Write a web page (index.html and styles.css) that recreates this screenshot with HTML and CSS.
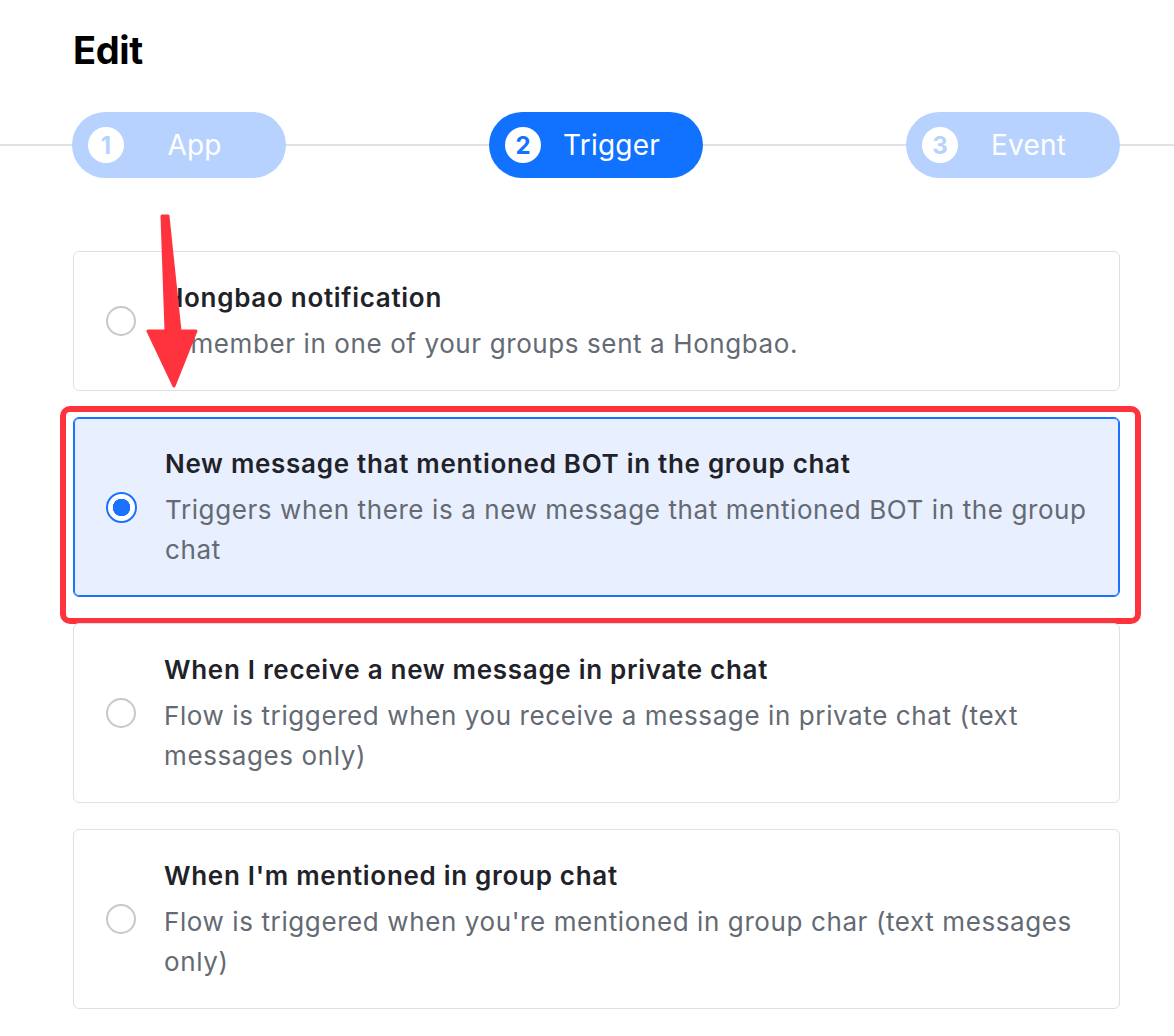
FILE: index.html
```html
<!DOCTYPE html>
<html lang="en">
<head>
<meta charset="utf-8">
<title>Edit</title>
<link rel="stylesheet" href="styles.css">
</head>
<body>
<div class="page">
  <h1 class="title">Edit</h1>

  <div class="steps">
    <div class="step step-done"><span class="step-num">1</span><span class="step-label">App</span></div>
    <div class="step step-active"><span class="step-num">2</span><span class="step-label">Trigger</span></div>
    <div class="step step-todo"><span class="step-num">3</span><span class="step-label">Event</span></div>
  </div>

  <div class="options">
    <div class="option">
      <span class="radio"></span>
      <div class="option-text">
        <div class="option-title">Hongbao notification</div>
        <div class="option-desc">A member in one of your groups sent a Hongbao.</div>
      </div>
    </div>
    <div class="option option-selected annotated">
      <span class="radio radio-on"></span>
      <div class="option-text">
        <div class="option-title">New message that mentioned BOT in the group chat</div>
        <div class="option-desc">Triggers when there is a new message that mentioned BOT in the group chat</div>
      </div>
    </div>
    <div class="option">
      <span class="radio"></span>
      <div class="option-text">
        <div class="option-title">When I receive a new message in private chat</div>
        <div class="option-desc">Flow is triggered when you receive a message in private chat (text messages only)</div>
      </div>
    </div>
    <div class="option">
      <span class="radio"></span>
      <div class="option-text">
        <div class="option-title">When I'm mentioned in group chat</div>
        <div class="option-desc">Flow is triggered when you're mentioned in group char (text messages only)</div>
      </div>
    </div>
  </div>

  <svg class="arrow" width="60" height="180" viewBox="140 212 60 180" aria-hidden="true">
    <polygon points="162,216 168,216 180,331 196,331 174,386 148,331 166,331" fill="#ff333d" stroke="#ff333d" stroke-width="3" stroke-linejoin="round"/>
  </svg>
</div>
</body>
</html>
```

FILE: styles.css
```css
* { box-sizing: border-box; }

html, body {
  margin: 0;
  padding: 0;
  background: #ffffff;
}

body {
  font-family: Inter, "Noto Sans", "Liberation Sans", sans-serif;
  color: #1f2329;
}

.page {
  position: relative;
  width: 1174px;
  min-height: 1036px;
  overflow: hidden;
}

.title {
  margin: 26px 0 0 73px;
  font-size: 38px;
  line-height: 48px;
  font-weight: 700;
  color: #000000;
  letter-spacing: -0.4px;
}

.steps {
  margin-top: 38px;
  padding: 0 54px 0 72px;
  display: flex;
  justify-content: space-between;
  align-items: center;
  background: linear-gradient(#e1e1e6, #e1e1e6) no-repeat 0 50% / 100% 2px;
}

.step {
  width: 214px;
  height: 66px;
  border-radius: 33px;
  display: flex;
  align-items: center;
  padding: 0 21px 0 16px;
  color: #ffffff;
}

.step-done, .step-todo { background: #b7d2fe; }
.step-active { background: #1072ff; }

.step-num {
  width: 36px;
  height: 36px;
  border-radius: 50%;
  background: #ffffff;
  display: flex;
  align-items: center;
  justify-content: center;
  font-size: 24px;
  font-weight: 700;
  flex: none;
}
.step-done .step-num, .step-todo .step-num { color: #b7d2fe; }
.step-active .step-num { color: #1072ff; }

.step-label {
  flex: 1;
  text-align: center;
  font-size: 28px;
  line-height: 34px;
  letter-spacing: 0.2px;
}

.options {
  margin: 73px 54px 0 73px;
  display: flex;
  flex-direction: column;
  gap: 26px;
}

.option {
  position: relative;
  display: flex;
  align-items: center;
  gap: 28px;
  padding: 26px 24px 26px 32px;
  border: 1px solid #dee0e3;
  border-radius: 6px;
  background: #ffffff;
}

.option-selected {
  background: #e8effe;
  border-color: #1a73ff;
  box-shadow: inset 0 0 0 1px #1a73ff;
}

.annotated::after {
  content: "";
  position: absolute;
  top: -12px;
  left: -14px;
  right: -22px;
  bottom: -28px;
  border: 6px solid #ff333d;
  border-radius: 10px;
  pointer-events: none;
}

.radio {
  flex: none;
  width: 30px;
  height: 30px;
  border-radius: 50%;
  border: 2px solid #c5c8cd;
  background: #ffffff;
}

.radio-on {
  width: 31px;
  height: 31px;
  border: 2px solid #1a73ff;
  background: radial-gradient(circle, #1a73ff 0 8.5px, #ffffff 9px);
}

.option-text {
  flex: 1;
  min-width: 0;
}

.option-title {
  font-size: 26px;
  line-height: 40px;
  font-weight: 600;
  color: #1f2329;
  margin-bottom: 6px;
  letter-spacing: 0.7px;
}

.option-desc {
  font-size: 26px;
  line-height: 40px;
  color: #646a73;
  letter-spacing: 0.6px;
}

.arrow {
  position: absolute;
  left: 140px;
  top: 212px;
}
```
